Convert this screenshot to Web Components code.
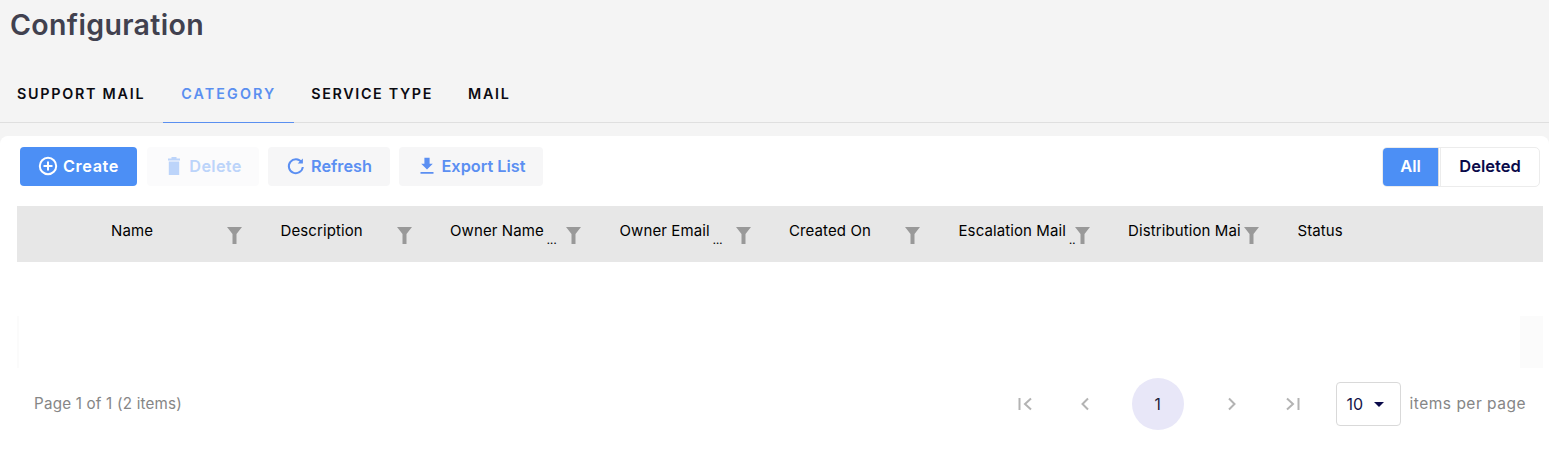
<!DOCTYPE html>
<html>
<head>
<meta charset="utf-8">
<title>Configuration</title>
<style>
    html, body { margin: 0; height: 453px; overflow: hidden; }
    body { background: #f4f4f4; font-family: Inter, "Liberation Sans", sans-serif; }
</style>
</head>
<body>
<config-page>
    <span slot="title">Configuration</span>
    <config-tabs slot="tabs">
        <config-tab>SUPPORT MAIL</config-tab>
        <config-tab active>CATEGORY</config-tab>
        <config-tab>SERVICE TYPE</config-tab>
        <config-tab>MAIL</config-tab>
    </config-tabs>
    <config-toolbar slot="toolbar">
        <tool-button icon="create" primary w="117">Create</tool-button>
        <tool-button icon="delete" disabled w="112">Delete</tool-button>
        <tool-button icon="refresh" w="122">Refresh</tool-button>
        <tool-button icon="export" w="144">Export List</tool-button>
        <view-toggle slot="right"></view-toggle>
    </config-toolbar>
    <grid-header slot="grid">
        <header-cell>Name</header-cell>
        <header-cell>Description</header-cell>
        <header-cell more="...">Owner Name</header-cell>
        <header-cell more="...">Owner Email</header-cell>
        <header-cell>Created On</header-cell>
        <header-cell more="..">Escalation Mail</header-cell>
        <header-cell>Distribution Mail</header-cell>
        <header-cell plain>Status</header-cell>
    </grid-header>
    <grid-pager slot="pager"></grid-pager>
</config-page>

<script>
const ICONS = {
    create: `<svg width="20" height="20" viewBox="0 0 20 20" fill="none" stroke="currentColor" stroke-width="2"><circle cx="10" cy="10" r="8.2"/><path d="M10 5.5v9M5.5 10h9"/></svg>`,
    delete: `<svg width="20" height="20" viewBox="0 0 20 20" fill="currentColor"><path d="M4 2.6h12v1.8H4zM7.5 1h5v1.6h-5zM4.800 5.4h10.4V19H4.800z"/></svg>`,
    refresh: `<svg width="20" height="20" viewBox="0 0 20 20" fill="none" stroke="currentColor" stroke-width="2"><path d="M15.6 6.2A7 7 0 1 0 16.8 11"/><path d="M16.9 2.4v5.2h-5.2" fill="currentColor" stroke="none"/></svg>`,
    export: `<svg width="20" height="20" viewBox="0 0 20 20" fill="currentColor"><path d="M7.4 1.8h5.2v6h3.2L10 13.6 4.2 7.800h3.2zM3.500 16h13v1.800h-13z"/></svg>`
};

class ConfigPage extends HTMLElement {
    constructor() {
        super();
        this.attachShadow({ mode: "open" });
        this.shadowRoot.innerHTML = `
            <style>
                :host { display: block; height: 453px; color: #3d3d4e; }
                .title { height: 64px; padding: 6px 0 0 10px; box-sizing: border-box; font-size: 28.5px; line-height: 38px; font-weight: 600; letter-spacing: 0.35px; color: #41414f; }
                .card { margin-top: 13px; height: 317px; background: #fff; border-radius: 8px 8px 0 0; box-sizing: border-box; padding-top: 11px; }
                .gap { margin: 54px 6px 0 17px; height: 52px; display: flex; justify-content: space-between; }
                .gap i { background: #fbfbfb; width: 2px; }
                .gap i + i { width: 23px; }
            </style>
            <div class="title"><slot name="title"></slot></div>
            <slot name="tabs"></slot>
            <div class="card">
                <slot name="toolbar"></slot>
                <slot name="grid"></slot>
                <div class="gap"><i></i><i></i></div>
                <slot name="pager"></slot>
            </div>
        `;
    }
}

class ConfigTabs extends HTMLElement {
    constructor() {
        super();
        this.attachShadow({ mode: "open" });
        this.shadowRoot.innerHTML = `
            <style>
                :host { display: flex; height: 58px; border-bottom: 1px solid #dfdfdf; margin-left: -1px; }
            </style>
            <slot></slot>
        `;
    }
}

class ConfigTab extends HTMLElement {
    constructor() {
        super();
        this.attachShadow({ mode: "open" });
        this.shadowRoot.innerHTML = `
            <style>
                :host { display: flex; align-items: center; height: 58px; padding: 0 18px 1px; font-size: 14.3px; font-weight: 600; letter-spacing: 1.75px; color: #0b0b12; white-space: nowrap; }
                :host([active]) { color: #5a8ff0; letter-spacing: 2.100px; border-bottom: 1px solid #5a8ff0; padding-bottom: 0; }
                :host(:nth-child(3)) { letter-spacing: 1.650px; padding: 0 17px 1px; }
                :host(:nth-child(4)) { padding: 0 17px 1px 18px; }
            </style>
            <slot></slot>
        `;
    }
}

class ConfigToolbar extends HTMLElement {
    constructor() {
        super();
        this.attachShadow({ mode: "open" });
        this.shadowRoot.innerHTML = `
            <style>
                :host { display: flex; align-items: flex-start; gap: 9px; height: 59px; padding: 0 9px 0 20px; }
                .right { margin-left: auto; }
            </style>
            <slot></slot>
            <div class="right"><slot name="right"></slot></div>
        `;
    }
}

class ToolButton extends HTMLElement {
    constructor() {
        super();
        this.attachShadow({ mode: "open" });
        const icon = ICONS[this.getAttribute("icon")] || "";
        this.shadowRoot.innerHTML = `
            <style>
                :host { display: flex; align-items: center; justify-content: center; gap: 5px; height: 39px; box-sizing: border-box; padding-bottom: 2px; border-radius: 4px; background: #f6f6f7; color: #5b8ff2; font-size: 16.300px; font-weight: 600; white-space: nowrap; }
                :host([primary]) { background: #4c8ff5; color: #fff; letter-spacing: 0.6px; margin-right: 1px; }
                :host([disabled]) { background: #fbfbfc; color: #bcd4fa; letter-spacing: 0.3px; }
                svg { display: block; }
            </style>
            ${icon}<slot></slot>
        `;
        this.style.width = this.getAttribute("w") + "px";
    }
}

class ViewToggle extends HTMLElement {
    constructor() {
        super();
        this.attachShadow({ mode: "open" });
        this.shadowRoot.innerHTML = `
            <style>
                :host { display: flex; height: 40px; width: 158px; box-sizing: border-box; border: 1px solid #ececec; border-radius: 5px; overflow: hidden; font-size: 16.500px; font-weight: 600; background: #fff; }
                div { display: flex; align-items: center; justify-content: center; padding-bottom: 2px; box-sizing: border-box; }
                .all { width: 56px; background: #4c8ff5; color: #fff; border-right: 1px solid #dcdcdc; }
                .deleted { flex: 1; color: #0a0a4a; margin-left: 1px; border-left: 1px solid #ececec; }
            </style>
            <div class="all">All</div>
            <div class="deleted">Deleted</div>
        `;
    }
}

class GridHeader extends HTMLElement {
    constructor() {
        super();
        this.attachShadow({ mode: "open" });
        this.shadowRoot.innerHTML = `
            <style>
                :host { display: grid; grid-template-columns: 86px repeat(8, 169.5px) 1fr; height: 56px; margin: 0 6px 0 17px; background: #e7e7e7; }
            </style>
            <div></div>
            <slot></slot>
        `;
    }
}

class HeaderCell extends HTMLElement {
    constructor() {
        super();
        this.attachShadow({ mode: "open" });
        const more = this.getAttribute("more");
        this.shadowRoot.innerHTML = `
            <style>
                :host { display: flex; align-items: flex-start; padding: 16px 0 0 8px; font-size: 15px; letter-spacing: 0.1px; line-height: 18px; color: #000; white-space: nowrap; }
                .wrap { display: flex; width: 116px; flex: none; }
                .text { flex: none; max-width: 112px; overflow: hidden; }
                .dots { margin: 9px 0 0 3px; font-size: 10px; font-weight: 600; }
                svg { display: block; margin-top: 5px; }
            </style>
            <div class="wrap">
                <div class="text"><slot></slot></div>
                ${more ? `<span class="dots">${more}</span>` : ""}
            </div>
            ${this.hasAttribute("plain") ? "" : `<svg width="15" height="17" viewBox="0 0 15 17" fill="#999"><path d="M0 0h15L9.500 7V17H5.500V7z"/></svg>`}
        `;
    }
}

class GridPager extends HTMLElement {
    constructor() {
        super();
        this.attachShadow({ mode: "open" });
        const arrow = d => `<svg width="18" height="18" viewBox="0 0 18 18" fill="none" stroke="#b3b3b3" stroke-width="2"><path d="${d}"/></svg>`;
        this.shadowRoot.innerHTML = `
            <style>
                :host { display: flex; align-items: center; height: 60px; margin-top: 5px; padding: 0 23px 0 34px; font-size: 15.200px; color: #868686; }
                .info { margin-right: auto; letter-spacing: 0.2px; }
                .nav { display: flex; align-items: center; margin-top: 2px; }
                .nav span { width: 60px; display: flex; justify-content: center; }
                .nav span:first-child { width: 58px; }
                .page { width: 52px; height: 52px; border-radius: 50%; background: #e8e7f8; display: flex; align-items: center; justify-content: center; color: #20203a; margin: 0 18px 0 17px; font-size: 15.500px; }
                .select { width: 65px; height: 44px; box-sizing: border-box; border: 1px solid #d9d9d9; border-radius: 4px; margin: 2px 0 0 14px; display: flex; align-items: center; padding-left: 10px; gap: 11px; color: #14144a; font-size: 16px; }
                .select i { width: 0; height: 0; border: 5px solid transparent; border-top: 5px solid #0a0a4a; border-bottom: 0; }
                .label { margin-left: 9px; white-space: nowrap; font-size: 15.500px; letter-spacing: 0.5px; }
            </style>
            <div class="info">Page 1 of 1 (2 items)</div>
            <div class="nav">
                <span>${arrow("M2.500 3v12M14 3.500 8 9l6 5.500")}</span>
                <span>${arrow("M12 3.500 6.500 9l5.500 5.500")}</span>
                <div class="page">1</div>
                <span>${arrow("M6 3.500 11.500 9 6 14.500")}</span>
                <span>${arrow("M4 3.500 10 9l-6 5.500M15.500 3v12")}</span>
            </div>
            <div class="select">10<i></i></div>
            <div class="label">items per page</div>
        `;
    }
}

customElements.define("config-page", ConfigPage);
customElements.define("config-tabs", ConfigTabs);
customElements.define("config-tab", ConfigTab);
customElements.define("config-toolbar", ConfigToolbar);
customElements.define("tool-button", ToolButton);
customElements.define("view-toggle", ViewToggle);
customElements.define("grid-header", GridHeader);
customElements.define("header-cell", HeaderCell);
customElements.define("grid-pager", GridPager);
</script>
</body>
</html>
